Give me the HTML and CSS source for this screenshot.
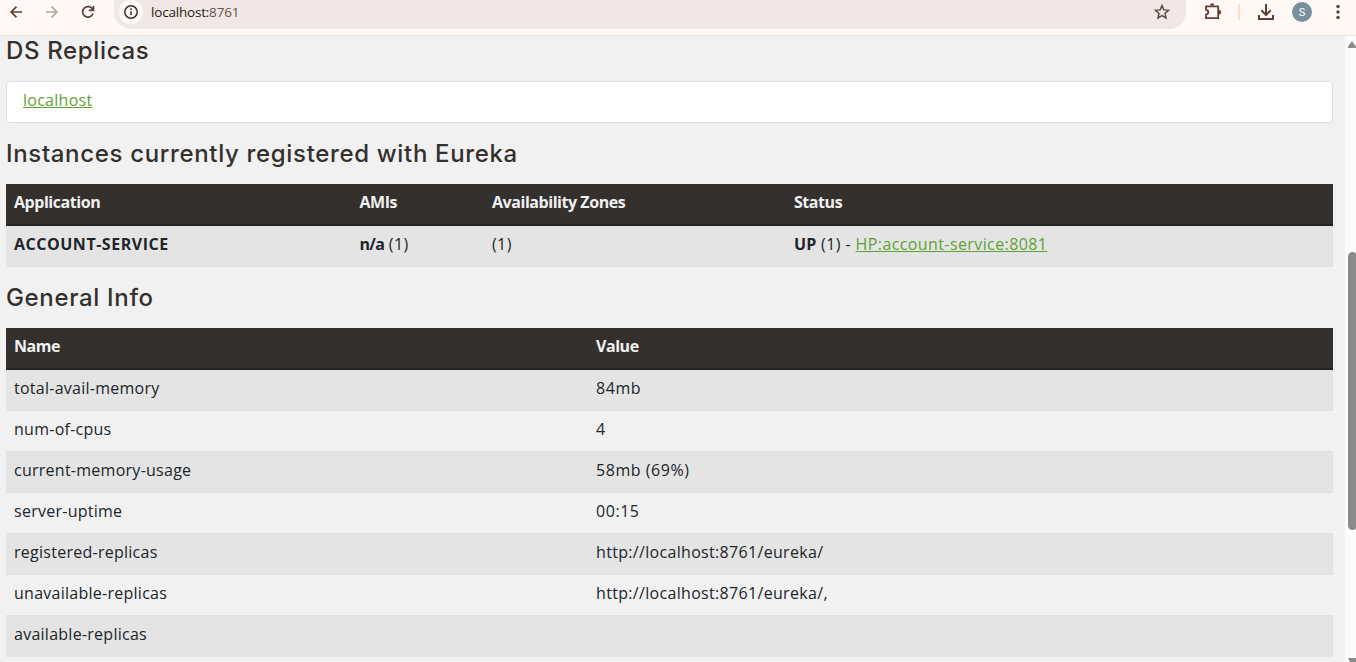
FILE: index.html
```
<!DOCTYPE html>
<html lang="en">
<head>
<meta charset="utf-8">
<title>Eureka</title>
<link rel="stylesheet" href="styles.css">
</head>
<body>
<header class="toolbar">
  <svg class="nav-icons" width="110" height="24" viewBox="0 0 110 24" fill="none" stroke="#5b4037" stroke-width="1.7">
    <path d="M22 12H11.500M16.500 6.700 11.200 12l5.300 5.300"/>
    <path d="M46 12h10.500M51.500 6.700 56.800 12l-5.300 5.300" stroke="#b5a49f"/>
    <path d="M92.700 9.500A5.300 5.300 0 1 0 93 13.500M93.500 6v4.300h-4.700"/>
  </svg>
  <div class="address">
    <span class="site-info">
      <svg width="24" height="24" viewBox="0 0 24 24" fill="none" stroke="#3b302d" stroke-width="1.5"><circle cx="12" cy="12" r="6.200"/><path d="M12 11.300v4M12 8.300v1.600"/></svg>
    </span>
    <span class="url">localhost:<span class="port">8761</span></span>
    <svg class="star" width="20" height="24" viewBox="0 0 20 24" fill="none" stroke="#5a4b48" stroke-width="1.500"><path d="M10 5.600l1.850 4.300 4.650.4-3.500 3.100 1.050 4.500L10 15.500l-4.050 2.400L7 13.400l-3.500-3.100 4.650-.4z"/></svg>
  </div>
  <svg class="actions" width="166" height="24" viewBox="1190 0 166 24">
    <path d="M1206 6.300h12.200v11.900H1206v-3.700q2.300-.5 2.300-2.300T1206 9.900z" fill="none" stroke="#5b4037" stroke-width="1.800" stroke-linejoin="round"/>
    <path d="M1210 5.500a2.100 2.300 0 0 1 4.200 0zM1219 10a2.200 2.200 0 0 1 0 4.400z" fill="#5b4037"/>
    <path d="M1239 4v16" stroke="#ffdccb" stroke-width="2"/>
    <path d="M1266 4v11M1261.300 10.300l4.700 4.700 4.700-4.700M1259 15v4h14v-4" fill="none" stroke="#5b4037" stroke-width="2"/>
    <circle cx="1302" cy="12" r="10" fill="#78909c"/>
    <text x="1302" y="16" class="avatar">S</text>
    <g fill="#5b4037"><circle cx="1338" cy="6.500" r="1.700"/><circle cx="1338" cy="12" r="1.700"/><circle cx="1338" cy="17.500" r="1.700"/></g>
  </svg>
</header>
<div class="viewport">
  <main class="content">
    <h1>DS Replicas</h1>
    <div class="replica"><a>localhost</a></div>
    <h1>Instances currently registered with Eureka</h1>
    <table class="instances">
      <colgroup><col class="c-app"><col class="c-ami"><col class="c-zone"><col></colgroup>
      <thead><tr><th>Application</th><th>AMIs</th><th>Availability Zones</th><th>Status</th></tr></thead>
      <tbody><tr><td><b class="app-name">ACCOUNT-SERVICE</b></td><td><b>n/a</b> (1)</td><td>(1)</td><td><b class="status">UP</b> (1) - <a>HP:account-service:8081</a></td></tr></tbody>
    </table>
    <h1>General Info</h1>
    <table class="general">
      <colgroup><col class="c-name"><col></colgroup>
      <thead><tr><th>Name</th><th>Value</th></tr></thead>
      <tbody>
        <tr><td>total-avail-memory</td><td class="figure">84mb</td></tr>
        <tr><td>num-of-cpus</td><td class="figure">4</td></tr>
        <tr><td>current-memory-usage</td><td class="figure">58mb (69%)</td></tr>
        <tr><td>server-uptime</td><td class="figure">00:15</td></tr>
        <tr><td>registered-replicas</td><td class="link">http://localhost:8761/eureka/</td></tr>
        <tr><td>unavailable-replicas</td><td class="link">http://localhost:8761/eureka/,</td></tr>
        <tr><td>available-replicas</td><td></td></tr>
      </tbody>
    </table>
  </main>
  <aside class="scrollbar">
    <svg width="11" height="626" viewBox="1345 36 11 626" fill="#8b8b8b"><path d="M1348 48v-1.500l4-5.500 5 7z"/><rect x="1348" y="252" width="9" height="278" rx="4.500"/><path d="M1348 658h9v4h-7z"/></svg>
  </aside>
</div>
</body>
</html>
```
FILE: styles.css
```
* { box-sizing: border-box; }
body { margin: 0; height: 662px; overflow: hidden; background: #f1f1f1; color: #212529; font: 16px/24px "Open Sans", sans-serif; }
.toolbar { display: flex; height: 36px; background: #fff8f5; border-bottom: 1px solid #f6ddd7; }
.nav-icons { flex: none; }
.address { display: flex; width: 1072px; height: 29px; margin-left: 4px; border-radius: 0 0 17px 17px; background: #f2e7e4; }
.site-info { width: 24px; height: 24px; margin-left: 5px; border-radius: 50%; background: #fff8f5; }
.url { margin-left: 8px; font-size: 13.5px; letter-spacing: -0.2px; color: #1f1b1a; }
.port { color: #62544f; }
.star { margin-left: auto; margin-right: 14px; }
.actions { margin-left: 4px; flex: none; }
.avatar { font: 11px Roboto, sans-serif; fill: #fff; text-anchor: middle; }
.viewport { display: flex; height: 626px; }
.content { width: 1345px; padding: 0 12px 0 6px; overflow: hidden; letter-spacing: 0.26px; }
.scrollbar { width: 11px; background: #fcfcfc; }
h1 { margin: 0; height: 61px; padding-top: 16px; font: 500 24px/30px Inter, sans-serif; letter-spacing: 0.66px; color: #34302d; }
h1:first-child { height: 45px; padding-top: 0; }
.replica { height: 42px; padding: 6px 16px; background: #fff; border: 1px solid #dfdfdf; border-radius: 4px; }
a { color: #5fa134; text-decoration: underline; }
table { width: 1327px; border-collapse: separate; border-spacing: 0; table-layout: fixed; }
th { height: 42px; padding: 6px 8px 10px; text-align: left; letter-spacing: -0.45px; background: #34302d; color: #f1f1f1; border-bottom: 2px solid #212529; }
td { height: 41px; padding: 6px 8px 10px; border-bottom: 1px solid #dee2e6; }
tbody tr:nth-child(odd) { background: #e4e4e4; }
.instances td { letter-spacing: 0.4px; }
.instances b { letter-spacing: -0.7px; }
.instances .app-name { letter-spacing: 0.52px; }
.instances .status { letter-spacing: 0.2px; }
.figure { letter-spacing: 0.55px; }
.link { letter-spacing: 0.32px; }
.c-app { width: 345.5px; }
.c-ami { width: 132.5px; }
.c-zone { width: 302px; }
.c-name { width: 582px; }
```
